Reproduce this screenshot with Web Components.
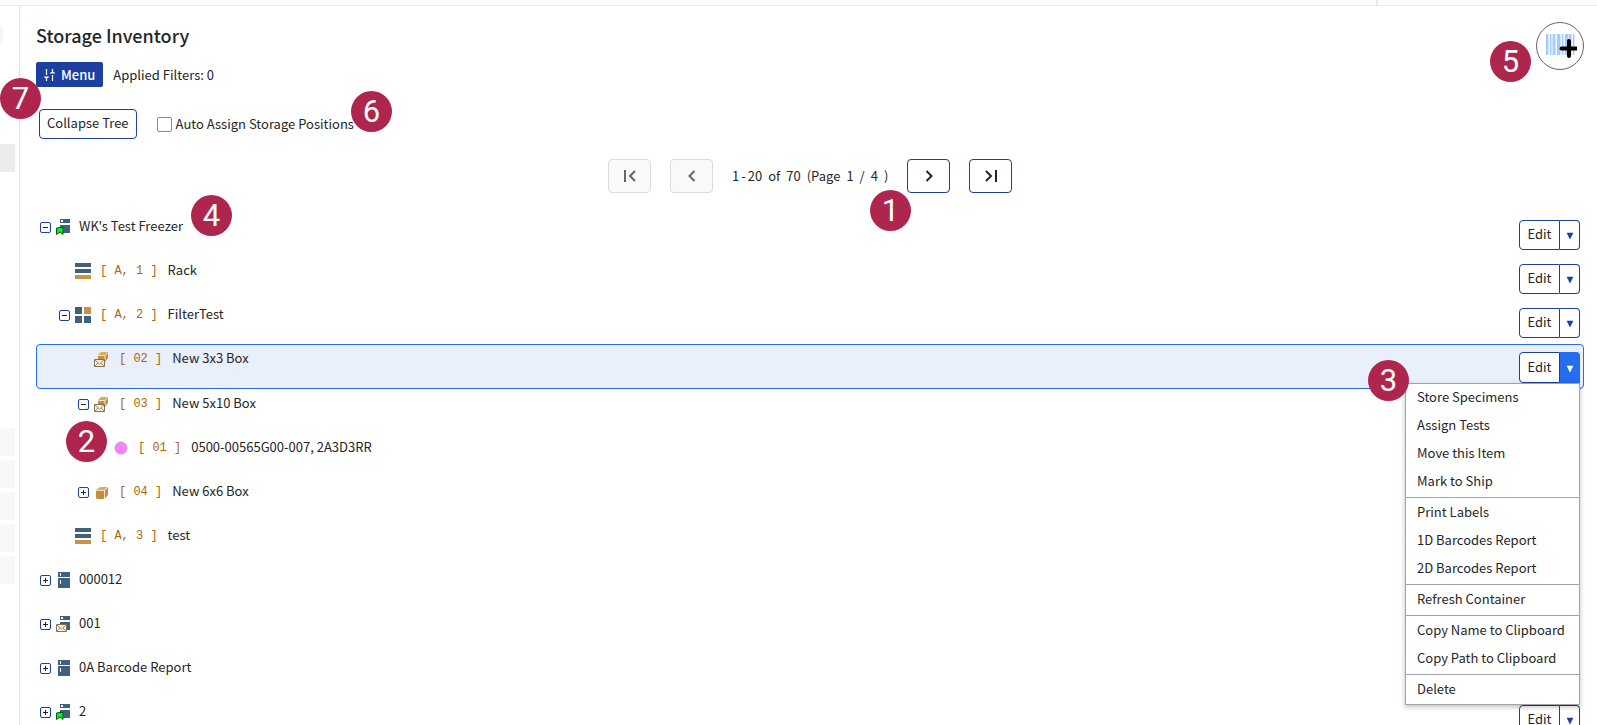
<!DOCTYPE html>
<html lang="en">
<head>
<meta charset="utf-8">
<title>Storage Inventory</title>
<style>
  :root {
    --blue: #1c3fa0;
    --bright: #266dee;
    --text: #262626;
    --badge: #ae264d;
  }
  body {
    margin: 0;
    overflow: hidden;
    background: white;
    color: var(--text);
    font: 13px/20px "Noto Sans CJK SC", "Noto Sans", sans-serif;
  }
</style>
</head>
<body>
<app-shell>
  <nav-rail slot="rail"></nav-rail>
  <inventory-head></inventory-head>
  <page-pager></page-pager>
  <storage-tree></storage-tree>
</app-shell>

<script>
function define(name, content) {
  customElements.define(name, class extends HTMLElement {
    constructor() {
      super();
      this.attachShadow({ mode : 'open' });
    }

    connectedCallback() {
      this.shadowRoot.innerHTML = typeof content === 'function' ? content(this) : content;
    }
  });
}

// numbered round marker, placed by whoever uses it
define('callout-badge', `
  <style>
    :host {
      position: absolute;
      z-index: 10;
      display: grid;
      place-items: center;
      width: 41px;
      height: 41px;
      border-radius: 50%;
      background: var(--badge);
      color: white;
      font: 31px/41px Roboto, sans-serif;
    }
  </style>
  <slot></slot>
`);

define('app-shell', `
  <style>
    :host {
      display: grid;
      grid-template: 6px 1fr / 19px 1fr;
      height: 100vh;
      overflow: hidden;
    }
    .top {
      grid-column: 1 / -1;
      display: flex;
      justify-content: flex-end;
      border-bottom: 1px solid #e9e9e9;
    }
    .top div {
      width: 219px;
      border-left: 2px solid #e9e9e9;
    }
    main {
      min-width: 0;
      padding: 16px 13px 0 16px;
      border-left: 1px solid #e4e4e4;
    }
  </style>
  <div class="top"><div></div></div>
  <slot name="rail"></slot>
  <main><slot></slot></main>
`);

define('nav-rail', `
  <style>
    :host {
      display: flex;
      flex-direction: column;
      gap: 4px;
      width: 15px;
    }
    .user {
      width: 3px;
      height: 18px;
      margin: 19px 0 97px;
      border-radius: 0 9px 9px 0;
      background: #f6f6f6;
    }
    .item { height: 28px; background: #f8f8f8; }
    .active { margin-bottom: 252px; background: #ececec; }
  </style>
  <div class="user"></div>
  <div class="item active"></div>
  <div class="item"></div>
  <div class="item"></div>
  <div class="item"></div>
  <div class="item"></div>
  <div class="item"></div>
`);

define('inventory-head', `
  <style>
    :host {
      position: relative;
      display: flex;
      justify-content: space-between;
      align-items: flex-start;
    }
    h1 {
      margin: 0 0 14px;
      font-size: 18px;
      line-height: 26px;
      font-weight: 500;
    }
    .filters, .options {
      display: flex;
      align-items: center;
    }
    .filters { gap: 10px; margin-bottom: 22px; }
    .options { gap: 20px; padding-left: 3px; }
    button {
      font: inherit;
      color: inherit;
      background: white;
      cursor: pointer;
    }
    .menu {
      display: flex;
      align-items: center;
      gap: 5px;
      height: 25px;
      padding: 0 8px 0 7px;
      border: 0;
      border-radius: 2px;
      background: var(--blue);
      color: white;
      font-weight: 500;
    }
    .collapse {
      height: 30px;
      padding: 0 7px 2px;
      border: 1px solid var(--blue);
      border-radius: 4px;
    }
    label {
      display: flex;
      align-items: center;
      gap: 4px;
    }
    input {
      appearance: none;
      width: 15px;
      height: 15px;
      margin: 0;
      border: 1px solid #8c8c8c;
      border-radius: 2px;
      background: white;
    }
    .scan {
      display: grid;
      place-items: center;
      width: 48px;
      height: 48px;
      padding: 0;
      border: 1px solid #666;
      border-radius: 50%;
    }
    .b5 { right: 53px; top: 19px; }
    .b6 { left: 315px; top: 69px; }
    .b7 { left: -36px; top: 56px; }
  </style>
  <div>
    <h1>Storage Inventory</h1>
    <div class="filters">
      <button class="menu">
        <svg width="13" height="14" viewBox="0 0 13 14" fill="none" stroke="white" stroke-width="1.2">
          <path d="M3.500 1v6M1 9h5M3.500 9v4M9.500 13V7M7 5h5M9.500 5V1"/>
          <path d="M2 9h3l-1.500 2.500zM8 5h3l-1.500-2.500z" fill="white" stroke="none"/>
        </svg>
        Menu
      </button>
      <span>Applied Filters: 0</span>
    </div>
    <div class="options">
      <button class="collapse">Collapse Tree</button>
      <label><input type="checkbox">Auto Assign Storage Positions</label>
    </div>
  </div>
  <button class="scan" aria-label="Scan barcode">
    <svg width="34" height="26" viewBox="0 0 34 26">
      <rect x="3" y="1" width="29" height="21" fill="#d5e8ff"/>
      <path d="M3 1h2v21H3zM7 1h1v21H7zM10 1h2v21h-2zM14 1h3v21h-3zM19 1h1v21h-1zM22 1h3v21h-3zM26 1h2v21h-2zM30 1h1v21h-1z" fill="#a4ccfa"/>
      <path d="M6 1h1v21H6zM13 1h1v21h-1zM18 1h1v21h-1zM21 1h1v21h-1zM29 1h1v21h-1z" fill="#f2f8ff"/>
      <path d="M26 8v15M18.500 15.500h15" stroke="black" stroke-width="4" stroke-linecap="round"/>
    </svg>
  </button>
  <callout-badge class="b5">5</callout-badge>
  <callout-badge class="b6">6</callout-badge>
  <callout-badge class="b7">7</callout-badge>
`);

define('page-pager', `
  <style>
    :host {
      position: relative;
      display: flex;
      justify-content: center;
      align-items: center;
      gap: 19px;
      padding: 20px 0 19px;
    }
    button {
      display: grid;
      place-items: center;
      width: 43px;
      height: 34px;
      padding: 0;
      border: 1px solid var(--blue);
      border-radius: 4px;
      background: white;
      color: var(--text);
    }
    button:disabled {
      border-color: #dcdcdc;
      background: #f9f9f9;
      color: #666;
    }
    svg { fill: none; stroke: currentColor; stroke-width: 2; }
    .range {
      display: flex;
      gap: 6px;
      width: 156px;
      white-space: nowrap;
    }
    .range span:first-child { display: flex; gap: 2px; }
    .b1 { left: calc(50% + 60px); bottom: -19px; }
  </style>
  <button disabled aria-label="First page"><svg width="14" height="14"><path d="M2 1v12M12 2L7 7l5 5"/></svg></button>
  <button disabled aria-label="Previous page"><svg width="14" height="14"><path d="M9.500 2l-5 5 5 5"/></svg></button>
  <div class="range"><span><span>1</span><span>-</span><span>20</span></span><span>of</span><span>70</span><span>(Page</span><span>1</span><span>/</span><span>4</span><span>)</span></div>
  <button aria-label="Next page"><svg width="14" height="14"><path d="M4.500 2l5 5-5 5"/></svg></button>
  <button aria-label="Last page"><svg width="14" height="14"><path d="M2 2l5 5-5 5M12 1v12"/></svg></button>
  <callout-badge class="b1">1</callout-badge>
`);

const freezer = `
  <path d="M2 0h12v5H2zM2 6h12v10H2z" fill="#41607c"/>
  <path d="M4 1h1v3H4zM4 8h1v4H4z" fill="white"/>`;
const freezerSmall = `
  <path d="M4 0h10v4H4zM4 6h10v8H4z" fill="#41607c"/>
  <path d="M5 1h2v2H5z" fill="white"/>`;
const envelope = `
  <path d="M.5 8.500h10v7H.5z" fill="#f7f0dc" stroke="#857252"/>
  <path d="M1 9l4.500 4L10 9M1 15l3-3M10 15l-3-3" fill="none" stroke="#857252" stroke-width=".8"/>`;

const icons = {
  freezer,
  'freezer-flag': freezerSmall + `
    <path d="M.5 9h1.500V8.500h5v7L4 13l-3.500 2.500z" fill="#00f51e" stroke="#14501c"/>`,
  'freezer-mail': freezerSmall + envelope,
  rack: `
    <path d="M0 0h16v4H0zM0 6h16v4H0z" fill="#41607c"/>
    <path d="M0 12h16v4H0z" fill="#c79345"/>`,
  shelf: `
    <path d="M0 0h7v7H0zM0 9h7v7H0zM9 9h7v7H9z" fill="#41607c"/>
    <path d="M9 0h7v7H9z" fill="#c79345"/>`,
  box: `
    <path d="M2 6l4-3h8l-4 3z" fill="#d5ab68"/>
    <path d="M2 6.500h8V15H3l-1-1zM11 6l3-2.500V11l-3 3.500z" fill="#c48e3c"/>
    <path d="M2 6.300h8.500l3-2.800M10.500 6.300V15" stroke="#f5e7ca" stroke-width=".8" fill="none"/>`,
  'box-mail': `
    <path d="M4 4l3-3h7l-3 3z" fill="#d5ab68"/>
    <path d="M4 4h7l3-3v6l-3 4H4z" fill="#c48e3c"/>
    <path d="M4 4.500h7l3-3M11 4.500V9" stroke="#f5e7ca" fill="none"/>` + envelope,
  specimen: '<circle cx="8" cy="8" r="6" fill="#ff80ff" stroke="#b9a2b9"/>'
};

define('item-icon', el => `
  <style>
    :host { display: block; width: 16px; height: 16px; }
    svg { display: block; }
  </style>
  <svg width="16" height="16" viewBox="0 0 16 16">${icons[el.getAttribute('name')]}</svg>
`);

define('split-button', `
  <style>
    :host { display: flex; position: relative; height: 30px; }
    button {
      padding: 0;
      border: 1px solid var(--blue);
      background: white;
      color: var(--text);
      font: inherit;
      cursor: pointer;
    }
    .main {
      width: 41px;
      padding-bottom: 2px;
      border-radius: 4px 0 0 4px;
    }
    .more {
      display: grid;
      place-items: center;
      width: 20px;
      border-left: 0;
      border-radius: 0 4px 4px 0;
      color: var(--blue);
    }
    :host([open]) .more {
      border-color: var(--bright);
      border-bottom-right-radius: 0;
      background: var(--bright);
      color: white;
    }
    :host([open]) { height: 31px; }
  </style>
  <button class="main">Edit</button>
  <button class="more" aria-label="More actions"><svg width="8" height="8"><path d="M1 2h6L4 8z" fill="currentColor" stroke="currentColor" stroke-width=".5"/></svg></button>
  <slot></slot>
`);

const actions = [
  ['Store Specimens', 'Assign Tests', 'Move this Item', 'Mark to Ship'],
  ['Print Labels', '1D Barcodes Report', '2D Barcodes Report'],
  ['Refresh Container'],
  ['Copy Name to Clipboard', 'Copy Path to Clipboard'],
  ['Delete']
];

define('action-menu', `
  <style>
    :host {
      position: absolute;
      z-index: 5;
      top: 100%;
      right: 0;
      box-sizing: border-box;
      width: 175px;
      border: 1px solid #a3a3a3;
      background: white;
      box-shadow: 0 2px 5px rgba(0,0,0,0.25);
    }
    .group + .group {
      margin-top: 1px;
      padding-top: 1px;
      border-top: 1px solid #a3a3a3;
    }
    button {
      display: block;
      width: 100%;
      height: 28px;
      padding: 0 0 2px 11px;
      border: 0;
      background: none;
      color: var(--text);
      font: inherit;
      text-align: left;
      white-space: nowrap;
    }
  </style>
  ${actions.map(g => `<div class="group">${g.map(a => `<button>${a}</button>`).join('')}</div>`).join('')}
`);

define('tree-row', el => {
  const toggle = el.getAttribute('toggle');
  const coord = el.getAttribute('coord');
  const selected = el.hasAttribute('selected');
  return `
  <style>
    :host {
      display: flex;
      justify-content: space-between;
      box-sizing: border-box;
      height: 44px;
      padding: 8px 4px 0;
    }
    :host([selected]) {
      height: 45px;
      padding: 7px 3px 0;
      border: 1px solid var(--bright);
      border-radius: 4px;
      background: #e9effb;
    }
    .item {
      display: flex;
      align-items: center;
      height: 14px;
      padding-left: ${19 * el.getAttribute('level')}px;
    }
    .toggle {
      display: grid;
      place-items: center;
      width: 11px;
      height: 11px;
      margin-right: 5px;
      padding: 0;
      border: 1px solid var(--blue);
      border-radius: 2px;
      background: white;
    }
    .toggle.none { visibility: hidden; }
    .coord {
      margin: 0 3px 0 2px;
      color: #ab650c;
      font: 12px/16px "Liberation Mono", monospace;
      white-space: pre;
    }
    .name {
      padding: 0 0 2px 7px;
      line-height: 16px;
    }
    item-icon + .coord { margin-left: 9px; }
  </style>
  <div class="item">
    <button class="toggle ${toggle ? '' : 'none'}" aria-label="Toggle">
      <svg width="9" height="9"><path d="M2 4.500h5${toggle === 'plus' ? 'M4.500 2v5' : ''}" stroke="#222"/></svg>
    </button>
    <item-icon name="${el.getAttribute('icon')}"></item-icon>
    ${coord ? `<span class="coord">[ ${coord} ]</span>` : ''}
    <span class="name"><slot></slot></span>
  </div>
  ${el.hasAttribute('editable') ? `
  <split-button ${selected ? 'open' : ''}>
    ${selected ? '<action-menu></action-menu>' : ''}
  </split-button>` : ''}
`;
});

// the split button gets its menu from the row, so slot it in there
define('storage-tree', `
  <style>
    :host { display: block; position: relative; }
    .b2 { left: 30px; top: 209px; }
    .b3 { right: 175px; top: 148px; }
    .b4 { left: 155px; top: -17px; }
  </style>
  <tree-row level="0" toggle="minus" icon="freezer-flag" editable>WK's Test Freezer</tree-row>
  <tree-row level="1" icon="rack" coord="A, 1" editable>Rack</tree-row>
  <tree-row level="1" toggle="minus" icon="shelf" coord="A, 2" editable>FilterTest</tree-row>
  <tree-row level="2" icon="box-mail" coord="02" editable selected>New 3x3 Box</tree-row>
  <tree-row level="2" toggle="minus" icon="box-mail" coord="03">New 5x10 Box</tree-row>
  <tree-row level="3" icon="specimen" coord="01">0500-00565G00-007, 2A3D3RR</tree-row>
  <tree-row level="2" toggle="plus" icon="box" coord="04">New 6x6 Box</tree-row>
  <tree-row level="1" icon="rack" coord="A, 3">test</tree-row>
  <tree-row level="0" toggle="plus" icon="freezer">000012</tree-row>
  <tree-row level="0" toggle="plus" icon="freezer-mail">001</tree-row>
  <tree-row level="0" toggle="plus" icon="freezer">0A Barcode Report</tree-row>
  <tree-row level="0" toggle="plus" icon="freezer-flag" editable>2</tree-row>
  <callout-badge class="b2">2</callout-badge>
  <callout-badge class="b3">3</callout-badge>
  <callout-badge class="b4">4</callout-badge>
`);
</script>
</body>
</html>
